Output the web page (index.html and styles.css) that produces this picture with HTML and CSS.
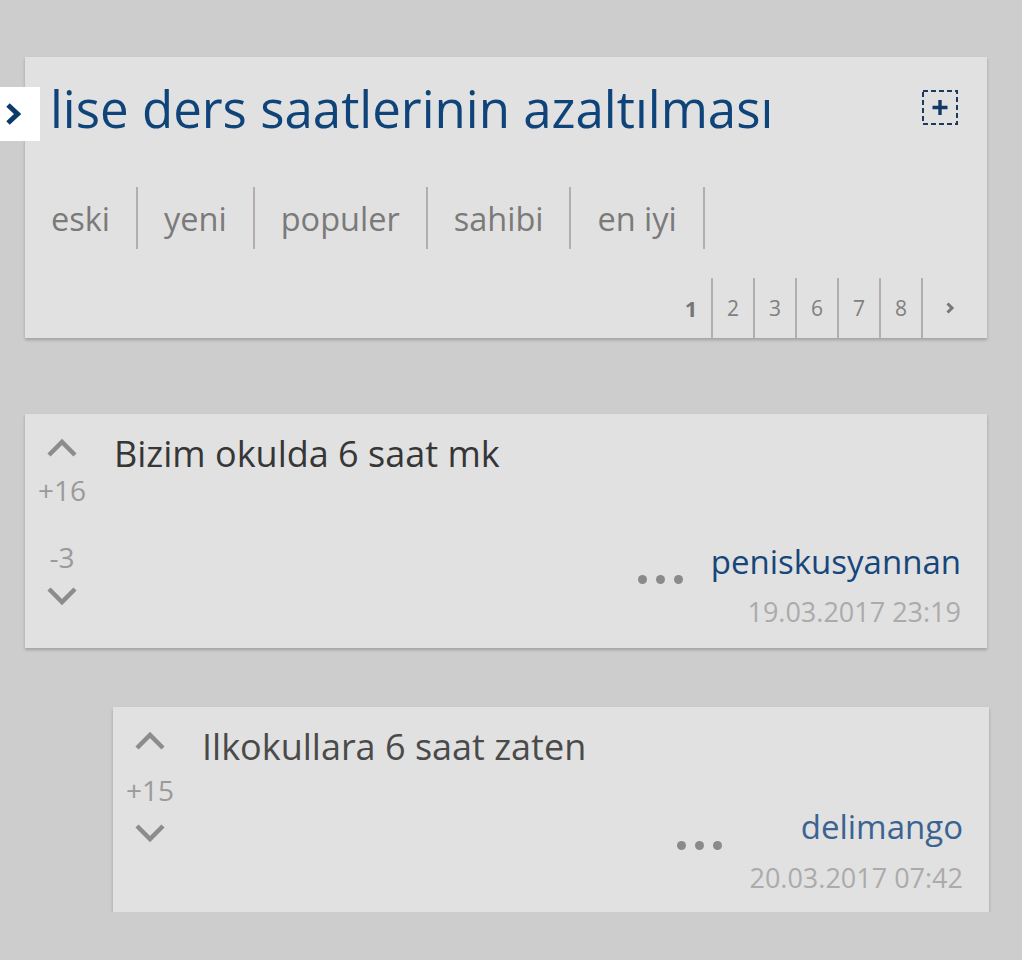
FILE: index.html
```html
<!DOCTYPE html>
<html lang="tr">
<head>
  <meta charset="UTF-8">
  <title>lise ders saatlerinin azaltılması</title>
  <meta name="viewport" content="width=device-width, initial-scale=1">
  <link rel="stylesheet" href="styles.css">
</head>
<body>
  <main class="page">
    <section class="topic card">
      <div class="topic-toggle">
        <svg width="16" height="24" viewBox="0 0 16 24"><polyline points="3,3 12.5,12 3,21" fill="none" stroke="#0d3a6b" stroke-width="5"/></svg>
      </div>
      <div class="topic-head">
        <h1 class="topic-title">lise ders saatlerinin azaltılması</h1>
        <svg class="add-icon" width="36" height="35" viewBox="0 0 36 35">
          <rect x="1" y="1" width="34" height="33" fill="none" stroke="#1d3a5e" stroke-width="2" stroke-dasharray="5 3"/>
          <path d="M18 10v15M10.5 17.5h15" stroke="#123866" stroke-width="3.4"/>
        </svg>
      </div>
      <nav class="tabs">
        <a class="tab">eski</a>
        <a class="tab">yeni</a>
        <a class="tab">populer</a>
        <a class="tab">sahibi</a>
        <a class="tab">en iyi</a>
      </nav>
      <div class="pager">
        <a class="page-num current">1</a>
        <a class="page-num">2</a>
        <a class="page-num">3</a>
        <a class="page-num">6</a>
        <a class="page-num">7</a>
        <a class="page-num">8</a>
        <a class="page-num next">
          <svg width="10" height="14" viewBox="0 0 10 14"><polyline points="2.5,2.5 7,7 2.5,11.5" fill="none" stroke="#777" stroke-width="3"/></svg>
        </a>
      </div>
    </section>

    <article class="entry card">
      <div class="votes">
        <svg class="arrow" width="32" height="20" viewBox="0 0 32 20"><polyline points="3,17 16,4 29,17" fill="none" stroke="#8c8c8c" stroke-width="4.5"/></svg>
        <span class="score">+16</span>
        <span class="score minus">-3</span>
        <svg class="arrow down" width="32" height="20" viewBox="0 0 32 20"><polyline points="3,3 16,16 29,3" fill="none" stroke="#8c8c8c" stroke-width="4.5"/></svg>
      </div>
      <div class="entry-body">
        <p class="entry-text">Bizim okulda 6 saat mk</p>
        <footer class="entry-foot">
          <div class="author-row">
            <span class="more"><i></i><i></i><i></i></span>
            <a class="author">peniskusyannan</a>
          </div>
          <time class="date">19.03.2017 23:19</time>
        </footer>
      </div>
    </article>

    <article class="entry reply card">
      <div class="votes">
        <svg class="arrow" width="32" height="20" viewBox="0 0 32 20"><polyline points="3,17 16,4 29,17" fill="none" stroke="#8c8c8c" stroke-width="4.5"/></svg>
        <span class="score">+15</span>
        <svg class="arrow" width="32" height="20" viewBox="0 0 32 20"><polyline points="3,3 16,16 29,3" fill="none" stroke="#8c8c8c" stroke-width="4.5"/></svg>
      </div>
      <div class="entry-body">
        <p class="entry-text">Ilkokullara 6 saat zaten</p>
        <footer class="entry-foot">
          <div class="author-row">
            <span class="more"><i></i><i></i><i></i></span>
            <a class="author">delimango</a>
          </div>
          <time class="date">20.03.2017 07:42</time>
        </footer>
      </div>
    </article>
  </main>
</body>
</html>
```

FILE: styles.css
```css
body {
  margin: 0;
  background: #cdcdcd;
  font-family: "Open Sans", "Noto Sans", sans-serif;
}
.page {
  padding-top: 57px;
}
.card {
  background: #e1e1e1;
  box-shadow: 0 2px 3px rgba(0, 0, 0, 0.22);
  margin: 0 35px 0 25px;
}

/* topic header */
.topic {
  position: relative;
  height: 281px;
  display: flex;
  flex-direction: column;
}
.topic-toggle {
  position: absolute;
  left: -25px;
  top: 30px;
  width: 40px;
  height: 54px;
  background: #fff;
  display: flex;
  align-items: center;
  padding-left: 5px;
  box-sizing: border-box;
}
.topic-head {
  display: flex;
  justify-content: space-between;
  align-items: flex-start;
  padding: 0 29px 0 25px;
  height: 128px;
}
.topic-title {
  margin: 0;
  margin-top: 17px;
  font-weight: normal;
  font-size: 51px;
  line-height: 68px;
  color: #0e4479;
}
.add-icon {
  margin-top: 33px;
}
.tabs {
  display: flex;
  padding-left: 26px;
  height: 62px;
  margin-top: 2px;
}
.tab {
  display: flex;
  align-items: center;
  padding: 0 26px;
  border-right: 2px solid #b3adad;
  font-size: 32.5px;
  color: #7a7a7a;
}
.tab:first-child {
  padding-left: 0;
}
.pager {
  display: flex;
  justify-content: flex-end;
  margin-top: auto;
  height: 60px;
}
.page-num {
  width: 40px;
  display: flex;
  align-items: center;
  justify-content: center;
  font-size: 21px;
  color: #808080;
  border-right: 2px solid #b3adad;
}
.page-num.current {
  font-weight: bold;
  font-size: 22px;
  color: #777;
}
.page-num.next {
  border-right: 0;
  width: 64px;
  padding-right: 10px;
  box-sizing: border-box;
}

/* entries */
.entry {
  display: flex;
  margin-top: 76px;
  height: 234px;
  box-sizing: border-box;
  padding: 24px 26px 0 12px;
}
.reply {
  margin: 59px 33px 0 113px;
  height: 205px;
}
.votes {
  width: 50px;
  display: flex;
  flex-direction: column;
  align-items: center;
  color: #9a9a9a;
}
.score {
  font-size: 28px;
  line-height: 34px;
  margin-top: 15px;
}
.score.minus {
  margin-top: 33px;
}
.arrow.down {
  margin-top: 12px;
}
.reply .score {
  margin: 22px 0 16px;
}
.entry-body {
  flex: 1;
  padding-left: 27px;
  display: flex;
  flex-direction: column;
}
.entry-text {
  margin: 0;
  font-size: 36px;
  line-height: 32px;
  color: #363636;
}
.reply .entry-text {
  color: #4a4a4a;
}
.entry-foot {
  margin-top: 72px;
  display: flex;
  flex-direction: column;
  align-items: flex-end;
}
.reply .entry-foot {
  margin-top: 44px;
}
.author-row {
  display: flex;
  align-items: flex-start;
}
.more {
  display: flex;
  gap: 9px;
  margin: 33px 28px 0 0;
}
.reply .more {
  margin: 34px 79px 0 0;
}
.more i {
  width: 9px;
  height: 9px;
  border-radius: 50%;
  background: #8a8a8a;
}
.author {
  font-size: 33px;
  line-height: 40px;
  color: #16467a;
}
.reply .author {
  color: #3a6392;
}
.date {
  font-size: 27px;
  line-height: 40px;
  color: #ababab;
  margin-top: 8px;
}
```
